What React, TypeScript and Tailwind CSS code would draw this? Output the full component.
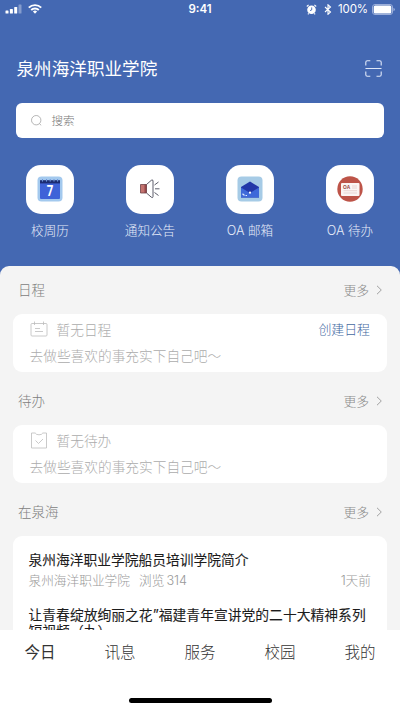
import type { ReactNode } from "react";

const shortcuts: { label: string; icon: ReactNode }[] = [
  { label: "校周历", icon: <CalendarIcon /> },
  { label: "通知公告", icon: <HornIcon /> },
  { label: "OA 邮箱", icon: <MailIcon /> },
  { label: "OA 待办", icon: <TodoIcon /> },
];

const tabs = ["今日", "讯息", "服务", "校园", "我的"];

function CalendarIcon() {
  return (
    <svg width="26" height="26" viewBox="0 0 26 26">
      <rect x="0.5" y="0.5" width="25" height="25" rx="4" fill="#a3c9ee" />
      <rect x="3" y="5" width="20" height="18" rx="1" fill="#3f63d8" />
      <rect x="3" y="4.2" width="20" height="3.2" fill="#1c2c73" />
      <path d="M5.5 3v2.6M9.5 3v2.6M13.2 3v2.6M17 3v2.6M20.6 3v2.6" stroke="#6f95dc" strokeWidth="1" />
      <text
        transform="translate(9.7 20.2) scale(0.82 1)"
        fontSize="14"
        className="font-['Roboto',sans-serif] font-bold"
        fill="#fff"
      >
        7
      </text>
    </svg>
  );
}

function HornIcon() {
  return (
    <svg width="26" height="26" viewBox="0 0 26 26" fill="none">
      <rect x="3.5" y="8.5" width="6" height="8.5" fill="#c4736f" />
      <path d="M7.5 8.5h2V17h-2z" fill="#94474a" />
      <path
        d="M9.5 8.5 14.3 4.3Q16 3.2 16 5v15.500q0 1.800-1.700.7L9.5 17"
        stroke="#4a4b59"
        strokeWidth="0.9"
      />
      <path d="M3.5 8.5h6V17h-6z" stroke="#704347" strokeWidth="0.8" />
      <path d="M17.500 9 21.500 6M18 12.800h4.500M17.500 16.500 21.500 19.500" stroke="#4a4b59" strokeWidth="0.9" />
    </svg>
  );
}

function MailIcon() {
  return (
    <svg width="26" height="26" viewBox="0 0 26 26">
      <rect x="0.5" y="0.5" width="25" height="25" rx="4" fill="#a6cbe6" />
      <path d="M4 11 13 5.500 22 11v10.500H4z" fill="#2338a8" />
      <path d="M4 11.500 13 17l9-5.500v10H4z" fill="#3f69d9" />
      <path d="M5.500 17.800 7.500 19.500M8.500 19.500h1.500" stroke="#dceaff" strokeWidth="1.2" />
      <circle cx="13" cy="16.700" r="1.100" fill="#fff" />
    </svg>
  );
}

function TodoIcon() {
  return (
    <svg width="26" height="26" viewBox="0 0 26 26">
      <circle cx="13" cy="13" r="12.700" fill="#bd5448" />
      <rect x="4" y="7" width="18.500" height="13" rx="1" fill="#fbf5f3" />
      <text x="6" y="12.500" fontSize="4.800" className="font-['Liberation_Sans'] font-bold" fill="#954139">
        OA
      </text>
      <path d="M15 10h5M15 12h5M6.500 14.700h13.500M6.500 17h13.500" stroke="#e4cdca" strokeWidth="0.8" />
    </svg>
  );
}

function StatusBar() {
  return (
    <div className="flex h-[18px] items-center justify-between px-[5px] text-white">
      <div className="flex w-[130px] items-center gap-[6px]">
        <svg width="17" height="10" viewBox="0 0 17 10" fill="#fff">
          <rect x="0.500" y="6.500" width="3" height="3" rx="0.600" />
          <rect x="4.900" y="5" width="3" height="4.500" rx="0.600" />
          <rect x="9.200" y="3" width="3" height="6.500" rx="0.600" />
          <rect x="13.500" y="0.500" width="3" height="9" rx="0.600" opacity="0.350" />
        </svg>
        <svg width="14" height="10" viewBox="0 0 14 10" fill="none" stroke="#fff" strokeWidth="1.900">
          <path d="M0.800 3.700a8.700 8.700 0 0 1 12.400 0" />
          <path d="M3.200 6a5.400 5.400 0 0 1 7.600 0" />
          <path d="M7 9.800 4.900 7.600a3 3 0 0 1 4.200 0z" fill="#fff" stroke="none" />
        </svg>
      </div>
      <span className="font-['Inter',sans-serif] text-[11.500px] leading-[17px] font-semibold">9:41</span>
      <div className="flex w-[130px] items-center justify-end">
        <svg width="11" height="11" viewBox="0 0 11 11">
          <circle cx="5.500" cy="5.800" r="4.300" fill="#fff" />
          <path d="M0.800 2.500 2.600 0.900M10.200 2.500 8.400 0.900M2.700 9.300l-.8 1M8.300 9.300l.8 1" stroke="#fff" strokeWidth="1.100" />
          <path d="M5.700 3.400v2.600L4 6.600" stroke="#4468b2" strokeWidth="0.900" fill="none" />
        </svg>
        <svg className="ml-[7px]" width="8" height="11" viewBox="0 0 8 11" fill="none" stroke="#fff" strokeWidth="1.100">
          <path d="M1 3l5.500 5L4 10.300V.8L6.500 3 1 8" />
        </svg>
        <span className="ml-[6px] font-['Inter',sans-serif] text-[11.500px] leading-[18px] tracking-[-0.100px]">100%</span>
        <svg className="ml-[4px]" width="23" height="11" viewBox="0 0 23 11">
          <rect x="0.500" y="0.500" width="20" height="10" rx="2.500" fill="none" stroke="#a5b7df" strokeWidth="0.900" />
          <rect x="1.700" y="1.600" width="17.600" height="7.800" rx="1.500" fill="#fff" />
          <path d="M21.500 3.700q1.300.6 1.300 1.800t-1.300 1.800z" fill="#a5b7df" />
        </svg>
      </div>
    </div>
  );
}

function SectionHeader({ title }: { title: string }) {
  return (
    <div className="flex h-12 items-center justify-between pr-[17px] pb-px pl-[18px] text-[13.500px] font-light">
      <h2 className="text-[#7d7d7d]">{title}</h2>
      <div className="flex items-center gap-[7px] text-[12.800px] text-[#8a8a8a]">
        <span>更多</span>
        <svg width="7" height="10" viewBox="0 0 7 10" fill="none" stroke="#a0a0a0" strokeWidth="1">
          <path d="M1 .8 5.300 5 1 9.200" />
        </svg>
      </div>
    </div>
  );
}

function EmptyCard({ icon, title, action }: { icon: ReactNode; title: string; action?: string }) {
  return (
    <div className="mr-[13px] ml-[12.500px] h-[58px] rounded-[9px] bg-white pt-[2px] pr-[17px] pl-[17px] text-[13.700px] font-light text-[#acacac]">
      <div className="flex h-[26px] items-center">
        {icon}
        <span className="ml-[9px]">{title}</span>
        {action && <button className="ml-auto text-[12.900px] text-[#44699f]">{action}</button>}
      </div>
      <p className="h-[26px] leading-[26px]">去做些喜欢的事充实下自己吧～</p>
    </div>
  );
}

export default function App() {
  return (
    <div className="flex h-[710px] w-[400px] flex-col overflow-hidden bg-[#4468b2] font-['Noto_Sans_CJK_SC',sans-serif]">
      <StatusBar />

      <header className="mt-[37px] flex h-[26px] items-center justify-between pr-[18px] pl-[16.500px] text-white">
        <h1 className="text-[17.600px] leading-[24px] font-normal">泉州海洋职业学院</h1>
        <svg width="17" height="17" viewBox="0 0 17 17" fill="none" stroke="#dfe7f8" strokeWidth="1.100">
          <path d="M.8 5.500V2.300Q.8.8 2.300.8h3M11.500.8h3.200q1.500 0 1.500 1.500v3.200M16.200 11.500v3.200q0 1.500-1.500 1.500h-3.200M5.300 16.200h-3q-1.500 0-1.500-1.500v-3.200M.5 8.500h16" />
        </svg>
      </header>

      <div className="mx-[16.400px] mt-[22px] flex h-[35px] shrink-0 items-center rounded-[6px] bg-white pl-[15px]">
        <svg width="11" height="11" viewBox="0 0 11 11" fill="none" stroke="#a5a5a5" strokeWidth="0.800">
          <circle cx="5.200" cy="5.200" r="4.700" />
          <path d="m8.400 8.600 1.800 1.700" />
        </svg>
        <span className="ml-[9px] text-[11.500px] font-light text-[#777]">搜索</span>
      </div>

      <nav className="mt-[27px] flex h-[101px] shrink-0">
        {shortcuts.map(({ label, icon }) => (
          <div key={label} className="flex w-[100px] flex-col items-center">
            <div className="flex h-[48.500px] w-[48.500px] items-center justify-center rounded-[15px] bg-white">{icon}</div>
            <span className="mt-[7.500px] font-['Inter','Noto_Sans_CJK_SC',sans-serif] text-[12.600px] leading-5 font-light text-[#e6ecf9]">
              {label}
            </span>
          </div>
        ))}
      </nav>

      <main className="min-h-0 flex-1 overflow-hidden rounded-t-[9px] bg-[#f4f4f4]">
        <SectionHeader title="日程" />
        <EmptyCard
          title="暂无日程"
          action="创建日程"
          icon={
            <svg width="18" height="16" viewBox="0 0 18 16" fill="none" stroke="#bcbcbc" strokeWidth="0.800">
              <rect x="1" y="2.500" width="16" height="12.500" rx="1" />
              <path d="M4.500.5v3.500M13.500.5v3.500M5 7.500h5M5 10.500h8" />
            </svg>
          }
        />
        <div className="mt-[5px]">
          <SectionHeader title="待办" />
          <EmptyCard
            title="暂无待办"
            icon={
              <svg width="18" height="17" viewBox="0 0 18 17" fill="none" stroke="#bcbcbc" strokeWidth="0.800">
                <path d="M1.500 1h3.700q.8 1.800 3.800 1.800T12.800 1h3.700v15h-15zM5.500 8.500l3 3 4.500-4.500" />
              </svg>
            }
          />
        </div>
        <div className="mt-[5px]">
          <SectionHeader title="在泉海" />
          <div className="mr-[13px] ml-[12.500px] rounded-t-[9px] bg-white pt-[13px] pr-4 pl-4">
            <article className="whitespace-nowrap">
              <h3 className="text-[13.750px] leading-[21px] font-normal text-[#1c1c1c] [-webkit-text-stroke:0.1px]">
                泉州海洋职业学院船员培训学院简介
              </h3>
              <p className="flex h-[21px] items-center font-['Inter','Noto_Sans_CJK_SC',sans-serif] text-[12.700px] font-light text-[#999]">
                <span>泉州海洋职业学院</span>
                <span className="ml-[9px]">
                  浏览<span className="ml-[2px]">314</span>
                </span>
                <span className="ml-auto">1天前</span>
              </p>
            </article>
            <article className="mt-[16px] whitespace-nowrap">
              <h3 className="font-['Inter','Noto_Sans_CJK_SC',sans-serif] text-[13.800px] leading-[16px] font-normal text-[#1c1c1c] [-webkit-text-stroke:0.1px]">
                让青春绽放绚丽之花”福建青年宣讲党的二十大精神系列
                <br />
                短视频（九）
              </h3>
            </article>
          </div>
        </div>
      </main>

      <footer className="flex h-20 shrink-0 flex-col items-center justify-between bg-white pb-[7px]">
        <div className="flex h-11 w-full items-center">
          {tabs.map((tab, i) => (
            <button
              key={tab}
              className={`w-20 text-[15.500px] text-[#333] ${i === 0 ? "font-normal" : "font-light"}`}
            >
              {tab}
            </button>
          ))}
        </div>
        <div className="h-[5px] w-[143px] rounded-full bg-black" />
      </footer>
    </div>
  );
}
